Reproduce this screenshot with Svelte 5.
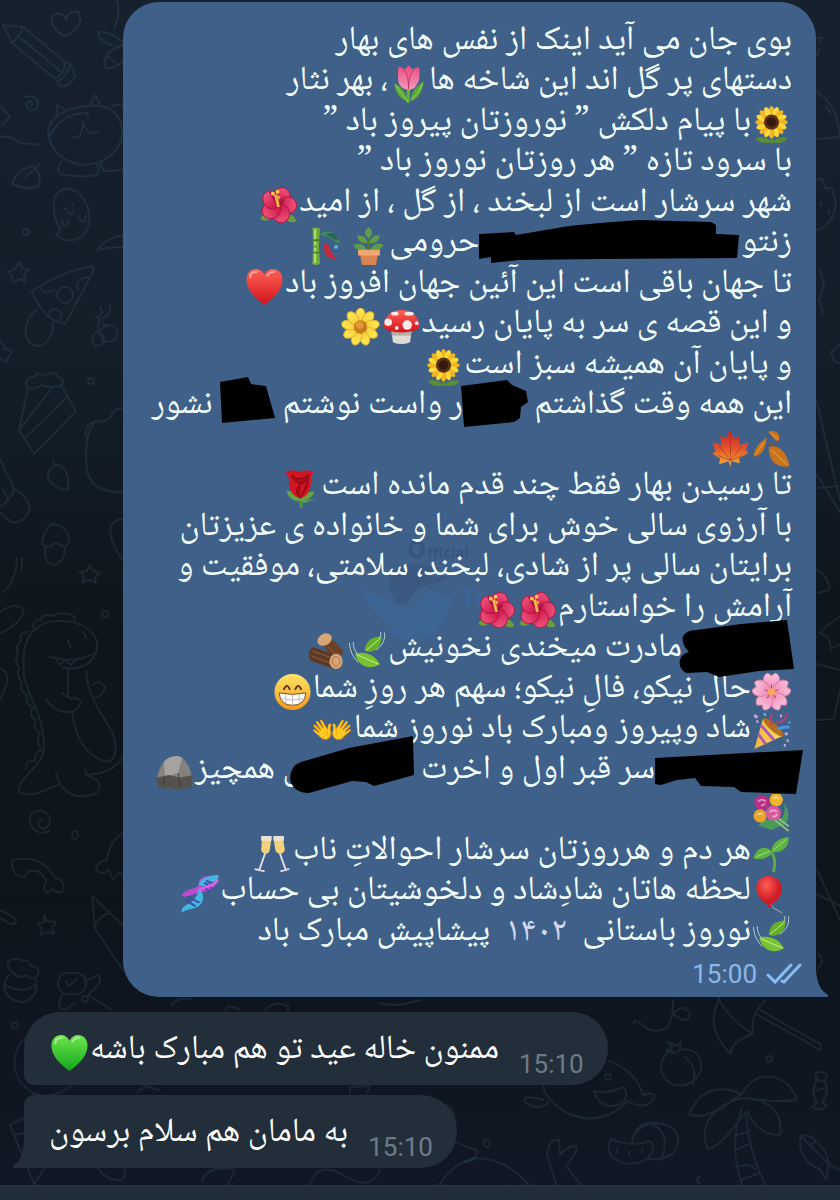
<script>
  // Each line is a list of parts: plain text, an emoji, a drawn picture, a scribble or the year.
  const e = (emoji) => ({ emoji });
  const pic = (name) => ({ pic: name });
  const ink = (x, y, width, lineTop, path) => ({ ink: true, x, y, width, top: y - lineTop, path });

  const lines = [
    ['بوی جان می آید اینک از نفس های بهار'],
    ['دستهای پر گل اند این شاخه ها', pic('tulip'), '، بهر نثار'],
    [pic('sunflower'), 'با پیام دلکش ” نوروزتان پیروز باد ”'],
    ['با سرود تازه ” هر روزتان نوروز باد ”'],
    ['شهر سرشار است از لبخند ، از گل ، از امید', pic('hibiscus')],
    ['زنتو', ink(480, 220, 262, 224, 'M480 234 515 232 517 235 570 226 601 223 640 220 712 222 717 225 717 234 740 235 738 258 600 259 520 260 492 263 492 257 480 259Z'), 'حرومی', pic('pot'), pic('bamboo')],
    ['تا جهان باقی است این آئین جهان افروز باد', pic('redheart')],
    ['و این قصه ی سر به پایان رسید', pic('mushroom'), pic('daisy')],
    ['و پایان آن همیشه سبز است', pic('sunflower')],
    ['این همه وقت گذاشتم ', ink(459, 380, 64, 386, 'M457 386 503 380 508 385 522 391 524 402 517 407 516 418 510 422 460 427Z'), 'ر واست نوشتم ', ink(216, 377, 55, 386, 'M216 382 244 377 247 384 262 386 271 418 218 423Z'), ' نشور'],
    [pic('autumn'), pic('maple')],
    ['تا رسیدن بهار فقط چند قدم مانده است', pic('rose')],
    ['با آرزوی سالی خوش برای شما و خانواده ی عزیزتان'],
    ['برایتان سالی پر از شادی، لبخند، سلامتی، موفقیت و'],
    ['آرامش را خواستارم', pic('hibiscus'), pic('hibiscus')],
    [ink(681, 620, 110, 629, 'M786 620 793 669 758 671 718 677 706 672 685 673Q677 668 679 660 680 654 688 652 680 644 682 636 686 630 695 630L740 624Z'), 'مادرت میخندی نخونیش', pic('leaves'), pic('logs')],
    [pic('blossom'), 'حالِ نیکو، فالِ نیکو؛ سهم هر روزِ شما', pic('grin')],
    [pic('party'), 'شاد وپیروز ومبارک باد نوروز شما', e('👐')],
    [ink(654, 750, 137, 751, 'M654 758 802 750 795 794 740 792 733 787 700 786 694 778 676 780 660 785 654 784Z'), 'سر قبر اول و اخرت ', ink(305, 736, 110, 751, 'M414 736 415 775 375 786 367 782 353 781 310 793Q294 793 291 779 291 766 302 762L350 748Z'), 'ی همچیز', pic('rock')],
    [pic('bouquet')],
    [pic('sprout'), 'هر دم و هرروزتان سرشار احوالاتِ ناب', pic('glasses')],
    [pic('balloon'), 'لحظه هاتان شادِشاد و دلخوشیتان بی حساب', pic('dna')],
    [pic('leaves'), 'نوروز باستانی ', { year: '۱۴۰۲' }, ' پیشاپیش مبارک باد']
  ];

  const replies = [
    { parts: ['ممنون خاله عید تو هم مبارک باشه', pic('greenheart')], time: '15:10' },
    { parts: ['به مامان هم سلام برسون'], time: '15:10', last: true }
  ];

  const turns = (n) => Array.from({ length: n }, (_, i) => (i * 360) / n);

  const doodles = [
    // pencil, heart, plane
    'M3 25 12 43 55 79M3 25 23 27 65 62M12 43Q19 38 23 27M17 35 60 71M55 79Q65 74 65 62 73 64 75 76 70 88 60 86ZM58 81Q66 78 69 67',
    'M66 36C54 32 50 22 53 16 58 11 65 15 66 20 68 11 77 9 80 15 82 26 73 33 66 36Z',
    'M117 0Q121 16 114 28M99 32Q108 30 123 42M98 33Q98 40 112 45M105 67Q102 52 123 45M106 68Q114 70 123 61M108 57 115 62',
    // spiral, squiggle, leaf
    'M25 97Q36 94 38 103 37 112 30 110 24 106 29 101 35 103 31 106M0 106 10 117 2 125M0 137Q8 135 15 140T38 144',
    'M12 184Q18 168 34 166 43 176 38 186 28 191 12 184ZM25 178 40 164',
    // cat and cushion
    'M49 137C45 120 64 108 86 106 112 103 123 116 122 136 119 153 104 164 82 165 64 162 51 151 49 137ZM56 117 57 105 66 110M90 106 95 95 101 106M49 137Q62 112 88 113M72 137Q83 140 83 122 88 138 98 132M72 119V121M88 114V116M61 162Q56 168 60 174 79 178 97 175 101 168 96 163M103 160Q98 166 105 171L123 170M112 106 123 104',
    // ghost
    'M54 210C52 194 61 188 69 189 82 191 91 207 89 223 86 241 67 245 56 235Q62 231 59 227 55 220 54 210ZM62 219Q62 227 67 226L68 219M78 215Q79 223 85 221L86 215M67 212Q71 216 74 211M64 208 66 209M73 204V206M26 229A3 3 0 1 0 26 235 3 3 0 1 0 26 229M123 235Q106 238 97 250 109 247 123 247',
    // star, mushroom, cherries
    'M19 262 22 268 28 270 24 275 25 281 19 279 13 283 12 276 8 272 15 269ZM32 291Q60 272 91 266 95 268 92 274L65 324Q42 319 32 291ZM40 287Q45 296 54 290M65 287A8 8 0 1 0 65 303 8 8 0 1 0 65 287M88 277Q74 278 78 290M48 317Q51 304 62 313L59 322M37 310C22 318 21 345 38 346 50 344 53 332 53 322',
    'M98 332A6 7 0 1 0 98 346 6 7 0 1 0 98 332M109 325A8 8 0 1 0 109 342 8 8 0 1 0 109 325M98 332 99 318 107 328M96 317Q105 317 100 307M103 318Q111 316 110 306M0 340 5 349 12 351 6 362 0 358M91 378A3 3 0 1 0 91 384 3 3 0 1 0 91 378',
    // cake slice
    'M28 388 19 430 34 454 76 411 62 387M19 430 52 388M25 438 68 396M27 388Q24 378 34 377 38 371 45 376 55 369 58 377 67 379 61 386 48 388 42 385 34 390 27 388Z',
    'M53 462 55 466Q47 470 48 478 54 489 68 490 70 474 63 468 58 464 55 466M87 440Q82 425 96 421 107 423 112 415 112 409 123 408M96 421Q83 433 87 470 91 493 123 492',
    // brush, acorn, star
    'M0 459 14 489Q26 494 30 509 24 524 11 522L0 512M3 490 9 500M14 489Q12 499 0 507M42 543Q44 530 52 524 67 525 69 540 68 548 62 546 56 540 51 546 44 548 42 543ZM45 547Q44 564 54 565 65 562 65 547M90 565 93 571 100 573 95 578 96 583 89 580 83 582 84 576 80 572 87 571ZM123 519Q112 519 110 530 112 548 123 560M17 558Q16 582 3 592M22 558V570',
    // dinosaur
    'M24 672C20 636 36 620 61 621 86 621 99 636 97 648 94 665 79 670 63 668M23 672C25 690 43 712 44 746 46 765 16 778 19 792 33 800 51 786 61 784M56 773Q62 796 81 796 105 796 98 781 86 776 85 770M86 775Q112 774 123 757M50 657Q76 664 95 653M56 659 60 665 65 660 71 665 77 659M72 711Q77 754 107 762 121 758 112 732L96 705Q87 687 86 671M46 700Q60 717 76 710 85 701 76 698 70 700 62 693M68 668V697M92 685Q101 678 105 688 102 698 93 698M68 641 71 648M83 632 86 638',
    'M33 627Q33 619 41 620 42 613 53 616 59 612 66 614 73 613 75 620M27 632Q19 632 21 641 15 646 18 653 14 662 19 668 16 676 22 683 19 691 27 695 24 704 33 707 28 717 36 720 32 729 40 733 35 743 42 750 34 752 35 761 25 759 26 769M0 612Q15 601 24 610 20 625 0 633M0 668Q10 672 6 686L0 700',
    // spiral, bone rainbow, ghost
    'M49 831C33 839 24 817 34 812 50 806 55 825 44 829 36 827 37 820 42 819M75 831A3 4 0 1 0 75 839 3 4 0 1 0 75 831M105 611A3 3 0 1 0 105 617 3 3 0 1 0 105 611M12 865Q10 858 20 859 43 856 55 878 66 880 63 891 56 894 53 889 45 897 44 886 50 881 39 872 28 868 25 877 13 876 12 865ZM123 833Q110 840 107 860 97 861 96 870 104 876 109 870L113 880 119 872 123 876',
    'M44 915 47 921 56 922 52 928 54 934 47 932 41 935 42 928 37 924 44 922ZM92 896 110 913Q97 916 95 929ZM95 929 123 970M110 913 123 925M0 910 16 919Q17 925 10 924L0 918',
    // cupcake, gingerbread, ball
    'M12 972Q4 965 11 960 19 957 22 961 29 958 31 966 42 968 37 976 31 981 27 975 20 980 12 972ZM9 975Q3 983 4 989 11 1003 25 1002 40 994 36 980M5 985Q24 995 36 984M15 1022A3 3 0 1 0 15 1028 3 3 0 1 0 15 1022M72 973A11 11 0 1 0 72 994 11 11 0 1 0 72 973M84 982 98 975Q103 980 96 987L88 995 112 1010M62 995Q55 1008 65 1010L75 1003M85 996A3 3 0 1 0 85 1002 3 3 0 1 0 85 996M66 981 69 986 77 979',
    'M29 1035C8 1050 10 1080 33 1093 48 1100 64 1092 72 1085M10 1125 36 1112M10 1125 34 1184 50 1160M14 1135 30 1132M95 1164Q104 1180 120 1180 128 1178 124 1168M172 1005Q178 996 190 1000 196 990 184 992M225 1010Q229 1003 240 1010M265 1010Q275 1000 288 1006V1015M380 1003Q395 1008 420 1000M350 1093V1087L370 1086 367 1094M138 1092 145 1086 160 1090M202 1180Q210 1164 235 1170L228 1184M445 1105Q458 1110 453 1125M453 1140Q462 1146 476 1150 479 1160 465 1162',
    // whale, hand, small bubbles
    'M440 1184Q452 1164 475 1158 505 1158 528 1184M487 1139A3 4 0 1 0 487 1147 3 4 0 1 0 487 1139M556 1184 547 1155Q549 1138 559 1140L560 1155Q574 1141 577 1149 570 1163 566 1166L580 1184M310 1184Q318 1160 345 1176T380 1170',
    'M609 1061Q636 1071 643 1095 657 1091 654 1099 643 1111 628 1101 600 1129 565 1112 546 1100 543 1086M543 1100Q526 1094 524 1101 538 1112 548 1103M594 1091Q608 1094 624 1087 630 1099 619 1105 599 1110 594 1091ZM608 1074A3 3 0 1 0 608 1080 3 3 0 1 0 608 1074',
    'M672 1050C656 1058 658 1080 675 1085 694 1088 706 1072 699 1057 693 1047 681 1048 676 1053M676 1053 666 1051 672 1047 668 1042 677 1046 681 1042 680 1049M685 1057Q698 1067 693 1084M634 1023Q634 1018 640 1023 652 1036 667 1028 674 1018 673 1000M673 1014Q684 1002 690 1014 688 1026 673 1014',
    'M720 998Q703 1027 731 1054 731 1041 753 1034 750 1013 766 1000M718 998Q730 1020 753 1034M760 1010 820 1044Q824 1053 814 1047M756 1014 812 1045M769 1056A3 3 0 1 0 769 1062 3 3 0 1 0 769 1056',
    // palm, orange, candy, fish
    'M742 1094C714 1082 697 1094 689 1115 704 1118 713 1112 722 1108 738 1096 742 1094 742 1094 757 1066 788 1074 797 1099 785 1103 763 1100 742 1098 770 1098 784 1115 780 1135 762 1135 752 1123 747 1111 735 1124 724 1145 708 1149 700 1133 705 1108 742 1098M742 1108Q728 1145 742 1184M746 1113Q748 1150 765 1184M737 1135 750 1131M735 1150 752 1143M737 1167Q748 1162 755 1169M740 1180 760 1173',
    'M611 1139Q606 1148 612 1157 630 1170 648 1158 657 1148 650 1141 633 1148 611 1139ZM632 1142Q635 1120 657 1123 683 1126 677 1148 670 1161 648 1159M652 1124Q672 1134 661 1160M637 1132Q644 1123 652 1124M617 1149V1153M629 1152V1155M642 1149V1153',
    'M815 1074 817 1080 825 1082 827 1075Q820 1069 815 1074ZM817 1080Q810 1092 817 1102M825 1082Q830 1091 822 1103M817 1102 812 1107Q821 1113 827 1105L822 1103M817 1090 826 1088M801 1136C810 1132 827 1147 829 1164L840 1170M829 1164 826 1180 820 1169C805 1165 797 1148 801 1136ZM810 1145 816 1141M700 1177A3 3 0 1 0 700 1183',
    // right edge
    'M817 38Q824 36 820 42M817 56 819 50M817 92Q838 104 840 138M826 106 831 113M818 139 840 137M817 180Q822 174 826 189 836 186 833 193 838 202 833 216 825 229 817 230M821 203V206M829 210V213M820 270 824 285 819 300 823 313M840 344 831 352 834 361 840 364M817 402Q830 460 840 500M817 475 840 512M818 488 840 486M817 570Q830 577 829 590L818 593M840 616 828 625 820 633 829 638 831 649 840 644M817 664 840 670M817 720 834 719 840 690M817 870 840 920M817 894 840 906M818 954Q826 961 818 968'
  ];
</script>

{#snippet picture(name)}
  <svg class="pic" viewBox="0 0 40 40" aria-hidden="true">
    {#if name === 'tulip'}
      <path d="M18 24h4l-1 16h-3z" fill="#63b33b"/>
      <path d="M5 19c1 11 6 17 14 19-1-9-6-14-14-19zM36 17c-1 11-5 18-14 21 1-10 6-16 14-21z" fill="#5aa836"/>
      <path d="M7 21c3 6 6 10 12 17M35 20c-3 6-6 11-12 17" stroke="#a5d96b" fill="none"/>
      <path d="M9 2c3 0 5 1 7 3l4-5 5 5c2-2 4-3 6-3 1 8 1 14-2 18-2 5-6 6-9 6-6 0-11-4-11-12z" fill="url(#pink)"/>
      <path d="M14 5c5 2 6 10 6 20M26 5c-4 3-6 10-6 20" stroke="#c92e66" fill="none"/>
    {:else if name === 'sunflower'}
      <path d="M19 28h3v11h-3z" fill="#5f8f2d"/>
      <path d="M20 38c-5-6-13-6-17-4 4 5 11 6 17 4zM21 38c5-6 12-6 16-4-4 5-10 6-16 4z" fill="#5c8c33"/>
      {#each turns(16) as a}<ellipse cx="20" cy="6" rx="3" ry="6" fill={a % 45 ? '#ffd83a' : '#f3b51d'} transform="rotate({a} 20 17)"/>{/each}
      <circle cx="20" cy="17" r="8" fill="#5a3213"/><circle cx="20" cy="17" r="5" fill="#32190b"/>
    {:else if name === 'hibiscus'}
      <path d="M1 34c2-6 7-9 13-8 0 7-6 12-13 8zM25 28c6-1 12 2 14 8-6 3-13 0-14-8z" fill="#6f9c3d"/>
      {#each turns(5) as a}<ellipse cx="20" cy="10" rx="9" ry="10" fill="url(#crimson)" stroke="#b3163f" stroke-width="1" transform="rotate({a + 20} 20 19)"/>{/each}
      <path d="M20 21 11 5M20 21 26 13" stroke="#a3123c" stroke-width="2"/>
      <path d="M20 21 17 8" stroke="#f2b84b" stroke-width="3"/>
      <circle cx="14" cy="7" r="2" fill="#f5cf4d"/><circle cx="19" cy="5" r="2" fill="#f5cf4d"/><circle cx="20" cy="11" r="2" fill="#e8a13a"/>
    {:else if name === 'pot'}
      <path d="M20 26V8" stroke="#4e7f35" stroke-width="2"/>
      <path d="M20 12c-5-4-5-8 0-12 5 4 5 8 0 12zM19 17C13 18 9 15 8 9c6-1 10 2 11 8zM21 17c6 1 10-2 11-8-6-1-10 2-11 8zM19 25c-7 2-12-1-15-6 6-3 12-1 15 6zM21 25c7 2 12-1 15-6-6-3-12-1-15 6z" fill="#5f9b4b"/>
      <path d="M11 28h19l-2 12H13z" fill="#d98350"/><path d="M9 24h23v6H9z" fill="#f0a873"/>
    {:else if name === 'bamboo'}
      <path d="M4 1q4-1 8 0l-1 19 1 19q-4 2-8 0l1-19z" fill="#6fae38"/>
      <path d="M7 2v17M7 22v16" stroke="#b9df72" stroke-width="2"/>
      <path d="M4 14h8M4 27h8" stroke="#477f28" stroke-width="2"/>
      <path d="M11 9C20 0 30 5 34 18 28 17 22 8 11 9z" fill="#3f8c55"/><path d="M18 8c8-4 13 0 13 6-5 0-8-4-13-6z" fill="#2d6658"/>
      <path d="M17 17c5-1 5 10 13 17-9 1-16-7-13-17z" fill="#c4283a"/><circle cx="29" cy="21" r="2" fill="#52bfe0"/>
    {:else if name === 'redheart' || name === 'greenheart'}
      <path d="M20 39C8 30 1 22 1 12 1 5 6 1 11 1c4 0 7 2 9 6 2-4 5-6 9-6 5 0 10 4 10 11 0 10-7 18-19 27z" fill={name === 'redheart' ? 'url(#red)' : 'url(#green)'}/>
      <path d="M5 10c0-4 3-6 7-6M23 8c2-3 4-4 7-4" stroke="#fff" stroke-opacity=".45" stroke-width="2" fill="none" stroke-linecap="round"/>
    {:else if name === 'mushroom'}
      <path d="M9 22h22l-2 14q-9 4-18 0z" fill="#dedad4"/><path d="M10 25h20v4H10z" fill="#b5aea6"/>
      <path d="M1 19C2 8 10 2 20 2s18 6 19 17c0 9-38 9-38 0z" fill="url(#red)"/>
      <circle cx="26" cy="18" r="5" fill="#fbe9e7"/><circle cx="6" cy="15" r="4" fill="#fbe9e7"/><ellipse cx="13" cy="6" rx="4" ry="2" fill="#fbe9e7"/><ellipse cx="28" cy="6" rx="5" ry="2" fill="#fbe9e7"/><circle cx="36" cy="16" r="2" fill="#fbe9e7"/><circle cx="15" cy="21" r="2" fill="#fbe9e7"/>
    {:else if name === 'daisy'}
      {#each turns(9) as a}<ellipse cx="20" cy="8" rx="5" ry="8" fill="url(#yellow)" stroke="#e0b32a" stroke-width="1" transform="rotate({a} 20 20)"/>{/each}
      <circle cx="20" cy="20" r="7" fill="#c67a1c"/><circle cx="19" cy="18" r="4" fill="#e09a33"/>
    {:else if name === 'autumn'}
      <path d="M17 16Q26 13 37 38" stroke="#8b4b15" stroke-width="2" fill="none"/>
      <path d="M15 8C9 12 2 18 1 28c9 0 13-9 14-20zM16 2c8-3 14 2 12 9-5 2-6-5-12-9zM17 18c12-4 20 8 22 20-13 3-22-5-22-20z" fill="#c9731d"/>
      <path d="M13 12 3 26M20 21l17 16M19 3l8 7" stroke="#f0aa4c" fill="none"/>
    {:else if name === 'maple'}
      <path d="M19 0l5 9 6-3-1 10 10-3-3 8 3 3-10 6 1 5-9-2-1 6-2-6-10 3 1-6-8-5 3-3-3-9 10 3-2-10 6 3z" fill="url(#fall)"/>
      <path d="M20 33V6M20 32 8 17M20 32l12-15M20 32 7 27M20 32l13-5" stroke="#8a1f17" stroke-opacity=".5" fill="none"/>
    {:else if name === 'rose'}
      <path d="M19 28h3v12h-3z" fill="#4f9a38"/><path d="M5 22c2 7 8 11 15 11s12-4 15-10c-5 0-25 0-30-1zM22 33l15-3-14 5z" fill="#63a544"/>
      <path d="M4 2c5-2 10-2 16 0 6-2 9-2 14 0-2 4-3 5-3 11 0 9-4 15-11 17C12 28 8 22 8 13 8 8 7 6 4 2z" fill="#d31722"/>
      <path d="M11 5c3 5 9 6 18 0-2 5-4 9-9 10-5-2-8-5-9-10zM20 15c-5 4-6 9 0 15M28 8c0 9-3 14-8 21" fill="#a80d18" stroke="#7d0a13"/>
    {:else if name === 'leaves'}
      <path d="M17 20C18 9 25 4 35 5c0 11-8 18-18 15z" fill="#64b02c"/><path d="M7 23c9-3 20 0 26 11-11 7-23 2-26-11z" fill="#78c236"/>
      <path d="M19 19 33 7M9 24l23 10" stroke="#d4f08a" fill="none"/>
      <path d="M38 1c1 8-3 14-9 18M34 0c0 3 0 5-1 6M1 12c1 10 4 14 9 20M5 11c0 5 1 7 4 12" stroke="#dcebe9" stroke-opacity=".8" fill="none" stroke-linecap="round"/>
    {:else if name === 'logs'}
      <path d="M12 9 20 1l18 19-8 12z" fill="#6b4129"/><ellipse cx="18" cy="8" rx="8" ry="6" fill="#d8a577" transform="rotate(-30 18 8)"/>
      <path d="M6 16 30 24l-2 15L3 30C0 26 1 18 6 16z" fill="#5d3823"/>
      <path d="M5 20l20 7M4 25l20 8M21 15l12 12" stroke="#8f6244" fill="none"/>
      <ellipse cx="30" cy="31" rx="7" ry="8" fill="#d8a577"/><ellipse cx="30" cy="31" rx="4" ry="5" fill="none" stroke="#a66f48"/>
    {:else if name === 'blossom'}
      {#each turns(5) as a}<path d="M20 20C9 13 10 2 16 0l4 3 4-3c6 2 7 13-4 20z" fill="url(#petal)" stroke="#db7fa8" stroke-width="1" transform="rotate({a} 20 20)"/>{/each}
      {#each turns(5) as a}<path d="M20 20v-8" stroke="#b43d63" transform="rotate({a} 20 20)"/>{/each}
      <circle cx="20" cy="20" r="4" fill="#f4a85d"/>
    {:else if name === 'grin'}
      <circle cx="20" cy="20" r="19" fill="url(#face)"/>
      <path d="M11 17q3-7 6 0M23 17q3-7 6 0" stroke="#5b3513" stroke-width="2" fill="none" stroke-linecap="round"/>
      <path d="M6 21q14 3 28 0-1 13-14 13T6 21z" fill="#fff" stroke="#7c4a17"/><path d="M8 27q12 3 24 0M13 22v10M20 23v11M27 22v10" stroke="#c3bdb4" fill="none"/>
    {:else if name === 'party'}
      <path d="M11 6 2 38 32 24Z" fill="url(#cone)"/><path d="M9 13l14 16M6 22l8 11" stroke="#a75ab5" stroke-width="3"/>
      <ellipse cx="22" cy="15" rx="4" ry="14" fill="#b3701c" transform="rotate(-48 22 15)"/>
      <path d="M21 13q-4-6 0-12M25 10q10 0 11-9" stroke="#c23f73" stroke-width="2" fill="none"/><path d="M27 17q5-3 12-2" stroke="#4b93e8" stroke-width="3" fill="none"/>
      <path d="M2 2l3 3M29 3h2M34 22h3M36 29h2M33 34h2M4 9h2" stroke="#d7a4dd" stroke-width="3"/><path d="M12 0l2 3M38 10h2" stroke="#56c0e6" stroke-width="2"/>
    {:else if name === 'rock'}
      <path d="M2 34C0 26 4 14 9 8c5-5 13-8 19-4 7 5 12 20 11 30-8 3-28 4-37 0z" fill="#85827f"/>
      <path d="M9 8c5-5 13-8 19-4l-4 16-14 4z" fill="#a5a29f"/><path d="M1 25l13-3 12 3 13-3v12c-8 4-29 4-37 0z" fill="#54514e"/><path d="M24 20l2 14M10 24l-2 9" stroke="#3c3936"/>
    {:else if name === 'bouquet'}
      <path d="M6 33c6-8 14-8 20-4 8-4 9-12 7-19 6 6 6 16 2 21L20 38z" fill="#4b9a5c"/>
      <path d="M22 26 38 39M25 24l13 10" stroke="#8dc07b" stroke-width="2"/>
      <circle cx="10" cy="9" r="8" fill="#b92f86"/><circle cx="25" cy="6" r="7" fill="#f0b429"/><circle cx="8" cy="23" r="7" fill="#e9a32b"/><circle cx="22" cy="20" r="8" fill="#d9589b"/>
      <path d="M6 8q4-4 8 0M22 5q3-3 6 0M5 22q3-3 6 0M18 19q4-4 8 0M9 12q3 0 4-2M21 24q4 0 5-3" stroke="#fff" stroke-opacity=".45" stroke-width="2" fill="none"/>
    {:else if name === 'sprout'}
      <path d="M22 39c3-9 1-17-2-21" stroke="#5fae45" stroke-width="3" fill="none"/>
      <path d="M20 18c0-10 8-15 18-16 1 11-7 17-18 16zM21 18C14 10 4 13 1 25c9 1 16 0 20-7z" fill="#5db343"/><path d="M22 16 36 4M4 23l14-6" stroke="#a6dd78" fill="none"/>
    {:else if name === 'glasses'}
      <path d="M9 3h10l-2 13c-1 5-7 5-9 0zM21 3h10l2 13c-2 5-8 5-10 0z" fill="#f3d27a"/>
      <path d="M8 1h11v5H8zM21 1h11v5H21z" fill="#e8e3d5"/>
      <path d="M12 20 6 37M2 36l9 2M28 20l6 17M29 38l8-2" stroke="#e3dbe6" stroke-width="2" stroke-linecap="round"/>
    {:else if name === 'balloon'}
      <path d="M19 31c2 5 9 6 12 9" stroke="#a9b7c6" fill="none"/><path d="M4 14C4 5 10 1 17 1s14 5 14 14c0 7-6 14-12 16l2 3h-5l1-3C10 29 4 21 4 14z" fill="url(#ball)"/>
    {:else if name === 'dna'}
      <path d="M20 5C26-1 34 2 40 0 39 14 31 16 24 18 13 20 8 24 1 22 6 13 14 16 19 11z" fill="#bb4bd0"/>
      <path d="M19 10C22 2 30 1 40 0l-1 8C31 5 28 8 25 13zM1 40c0-9 7-8 12-13 4-4 6-9 6-13 7 6 6 14 0 19C13 37 7 35 1 40z" fill="#43b7df"/>
      <path d="M25 8l10 7M23 12l8 5M8 23l12 6M6 27l10 6M27 6l11 5" stroke="#3e4cab" stroke-width="2"/><path d="M19 16c8-5 16-3 20-11" stroke="#d665e0" stroke-width="3" fill="none"/>
    {/if}
  </svg>
{/snippet}

{#snippet run(parts)}{#each parts as p}{#if typeof p === 'string'}{p}{:else if p.emoji}<span class="emoji">{p.emoji}</span>{:else if p.pic}{@render picture(p.pic)}{:else if p.year}<span class="year">{p.year}</span>{:else}<span class="ink" style="width:{p.width}px"><svg style="top:{p.top}px" width={p.width} height="60" viewBox="{p.x} {p.y} {p.width} 60" aria-hidden="true"><path d={p.path} /></svg></span>{/if}{/each}{/snippet}

<main>
  <svg class="wallpaper" viewBox="0 0 840 1200" preserveAspectRatio="xMidYMin slice" aria-hidden="true">
    <defs>
      <linearGradient id="pink" x2="0" y2="1"><stop stop-color="#e8487f"/><stop offset="1" stop-color="#f59ab8"/></linearGradient>
      <linearGradient id="red" x2="0" y2="1"><stop stop-color="#ff6258"/><stop offset="1" stop-color="#d3121c"/></linearGradient>
      <linearGradient id="green" x2="0" y2="1"><stop stop-color="#6ee64c"/><stop offset="1" stop-color="#13a51c"/></linearGradient>
      <linearGradient id="fall" x2="0" y2="1"><stop stop-color="#c9202a"/><stop offset=".5" stop-color="#e2542a"/><stop offset="1" stop-color="#f7b73c"/></linearGradient>
      <linearGradient id="face" x2="0" y2="1"><stop stop-color="#ffe464"/><stop offset="1" stop-color="#f39a1d"/></linearGradient>
      <linearGradient id="cone"><stop stop-color="#f4b53f"/><stop offset="1" stop-color="#ffdc6b"/></linearGradient>
      <linearGradient id="yellow" x2="0" y2="1"><stop stop-color="#ffe95a"/><stop offset="1" stop-color="#f5cb35"/></linearGradient>
      <linearGradient id="petal" x2="0" y2="1"><stop stop-color="#fbc3dc"/><stop offset="1" stop-color="#ee83b2"/></linearGradient>
      <linearGradient id="crimson" x2="0" y2="1"><stop stop-color="#f0527d"/><stop offset="1" stop-color="#c81447"/></linearGradient>
      <radialGradient id="ball" cx=".4" cy=".3"><stop stop-color="#ff5c55"/><stop offset="1" stop-color="#cf1b25"/></radialGradient>
    </defs>
    {#each doodles as d}<path {d} />{/each}
  </svg>

  <section class="thread">
    <article class="bubble sent">
      <svg class="watermark" viewBox="0 0 150 110" aria-hidden="true">
        <path d="M40 66C23 50 30 28 50 27 64 24 72 32 80 29 77 35 72 36 68 38 79 40 85 36 88 38 82 47 70 45 60 50 52 55 54 64 40 66Z" fill="#3a5880" />
        <path d="M0 44C8 54 20 58 30 62 36 68 44 72 55 72 56 60 66 50 78 54 84 56 86 60 94 60 90 66 90 76 83 86 74 100 53 106 37 98 27 95 31 90 35 88 20 82 6 66 0 44Z" fill="#3d6593" />
        <text x="48" y="20" fill="#38547c" font-size="24">O</text>
        <text x="68" y="20" fill="#38547c" font-size="15">fficial</text>
        <text x="102" y="68" fill="#3c6697" font-size="24">Te</text>
      </svg>
      <div class="poem" dir="rtl">
        {#each lines as parts}<p>{@render run(parts)}</p>{/each}
      </div>
      <footer>
        <time>15:00</time>
        <svg class="ticks" viewBox="0 0 36 22" aria-label="Read"><path d="M2 12l7 7L25 2M16 18l2 1L34 2" /></svg>
      </footer>
      <svg class="tail" viewBox="0 0 13 38" aria-hidden="true"><path d="M0 0V38H12Q13 37 11 35Q1 30 0 10Z" fill="#3f6189" /></svg>
    </article>

    {#each replies as r}
      <article class="bubble received" class:last={r.last}>
        <p dir="rtl">{@render run(r.parts)}</p>
        <time>{r.time}</time>
        {#if r.last}<svg class="tail" viewBox="0 0 12 28" aria-hidden="true"><path d="M12 0V28H1Q0 27 2 25Q11 20 12 0Z" fill="#222e3a" /></svg>{/if}
      </article>
    {/each}
  </section>
  <div class="composer"></div>
</main>

<style>
  :global(body) { background: #0e151e; }
  main {
    position: relative;
    min-height: 100vh;
    box-sizing: border-box;
    display: flex;
    flex-direction: column;
    overflow: hidden;
    background: linear-gradient(180deg, #16212e 0, #131e29 30%, #0e161d 52%, #0e141c 75%, #111724 100%);
    font-family: "Noto Naskh Arabic", "Noto Sans", sans-serif;
    color: #f4ffff;
  }
  .wallpaper {
    position: absolute;
    inset: 0;
    width: 100%;
    height: 100%;
    fill: none;
    stroke: #5b7f96;
    stroke-opacity: 0.17;
    stroke-width: 2;
    stroke-linecap: round;
    stroke-linejoin: round;
  }
  .thread {
    position: relative;
    flex: 1;
    display: flex;
    flex-direction: column;
    align-items: flex-start;
    gap: 10px;
    padding: 2px 24px 16px;
  }
  .bubble { position: relative; }
  p { margin: 0; font-size: 34px; line-height: 40px; white-space: nowrap; }
  .sent {
    align-self: flex-end;
    width: 87.5%;
    box-sizing: border-box;
    margin-bottom: 5px;
    padding: 20px 24px 4px;
    border-radius: 36px 36px 0 36px;
    background: #3f6189;
  }
  .poem { position: relative; }
  .poem p:nth-child(even) { line-height: 41px; }
  .emoji {
    display: inline-block;
    width: 41px;
    font-family: "Noto Color Emoji", sans-serif;
    font-size: 34px;
    line-height: 40px;
    text-align: center;
    vertical-align: top;
  }
  .pic {
    width: 41px;
    height: 40px;
    padding: 1px;
    box-sizing: border-box;
    vertical-align: top;
    position: relative;
    top: 2px;
  }
  .year { margin: 0 8px; color: #d3d8f0; }
  .ink { position: relative; display: inline-block; height: 40px; vertical-align: top; }
  .ink svg { position: absolute; left: 0; overflow: visible; fill: #000; }
  .watermark {
    position: absolute;
    left: 34%;
    top: 536px;
    width: 150px;
    height: 110px;
    overflow: visible;
    font-family: "Open Sans", sans-serif;
    font-weight: 700;
  }
  time { font: 26px/32px Roboto, sans-serif; }
  footer {
    display: flex;
    justify-content: flex-end;
    align-items: center;
    gap: 9px;
    height: 40px;
    margin-right: -10px;
    padding-top: 1px;
    box-sizing: border-box;
    color: #8bb8e8;
  }
  .ticks { width: 36px; height: 22px; fill: none; stroke: #86bdf5; stroke-width: 3; stroke-linecap: round; }
  .sent .tail { position: absolute; left: 100%; bottom: 0; width: 13px; height: 38px; }
  .received {
    display: flex;
    align-items: flex-end;
    gap: 20px;
    padding: 19px 24px 5px 25px;
    border-radius: 36px 36px 36px 10px;
    background: #222e3a;
    color: #fff;
  }
  .received p { padding-bottom: 9px; }
  .received time { color: #6d7b89; }
  .received.last { border-radius: 10px 36px 36px 0; }
  .received .tail { position: absolute; right: 100%; bottom: 0; width: 12px; height: 28px; }
  .composer { position: relative; height: 14px; border-top: 1px solid #2b3644; background: #212d3b; }
</style>
